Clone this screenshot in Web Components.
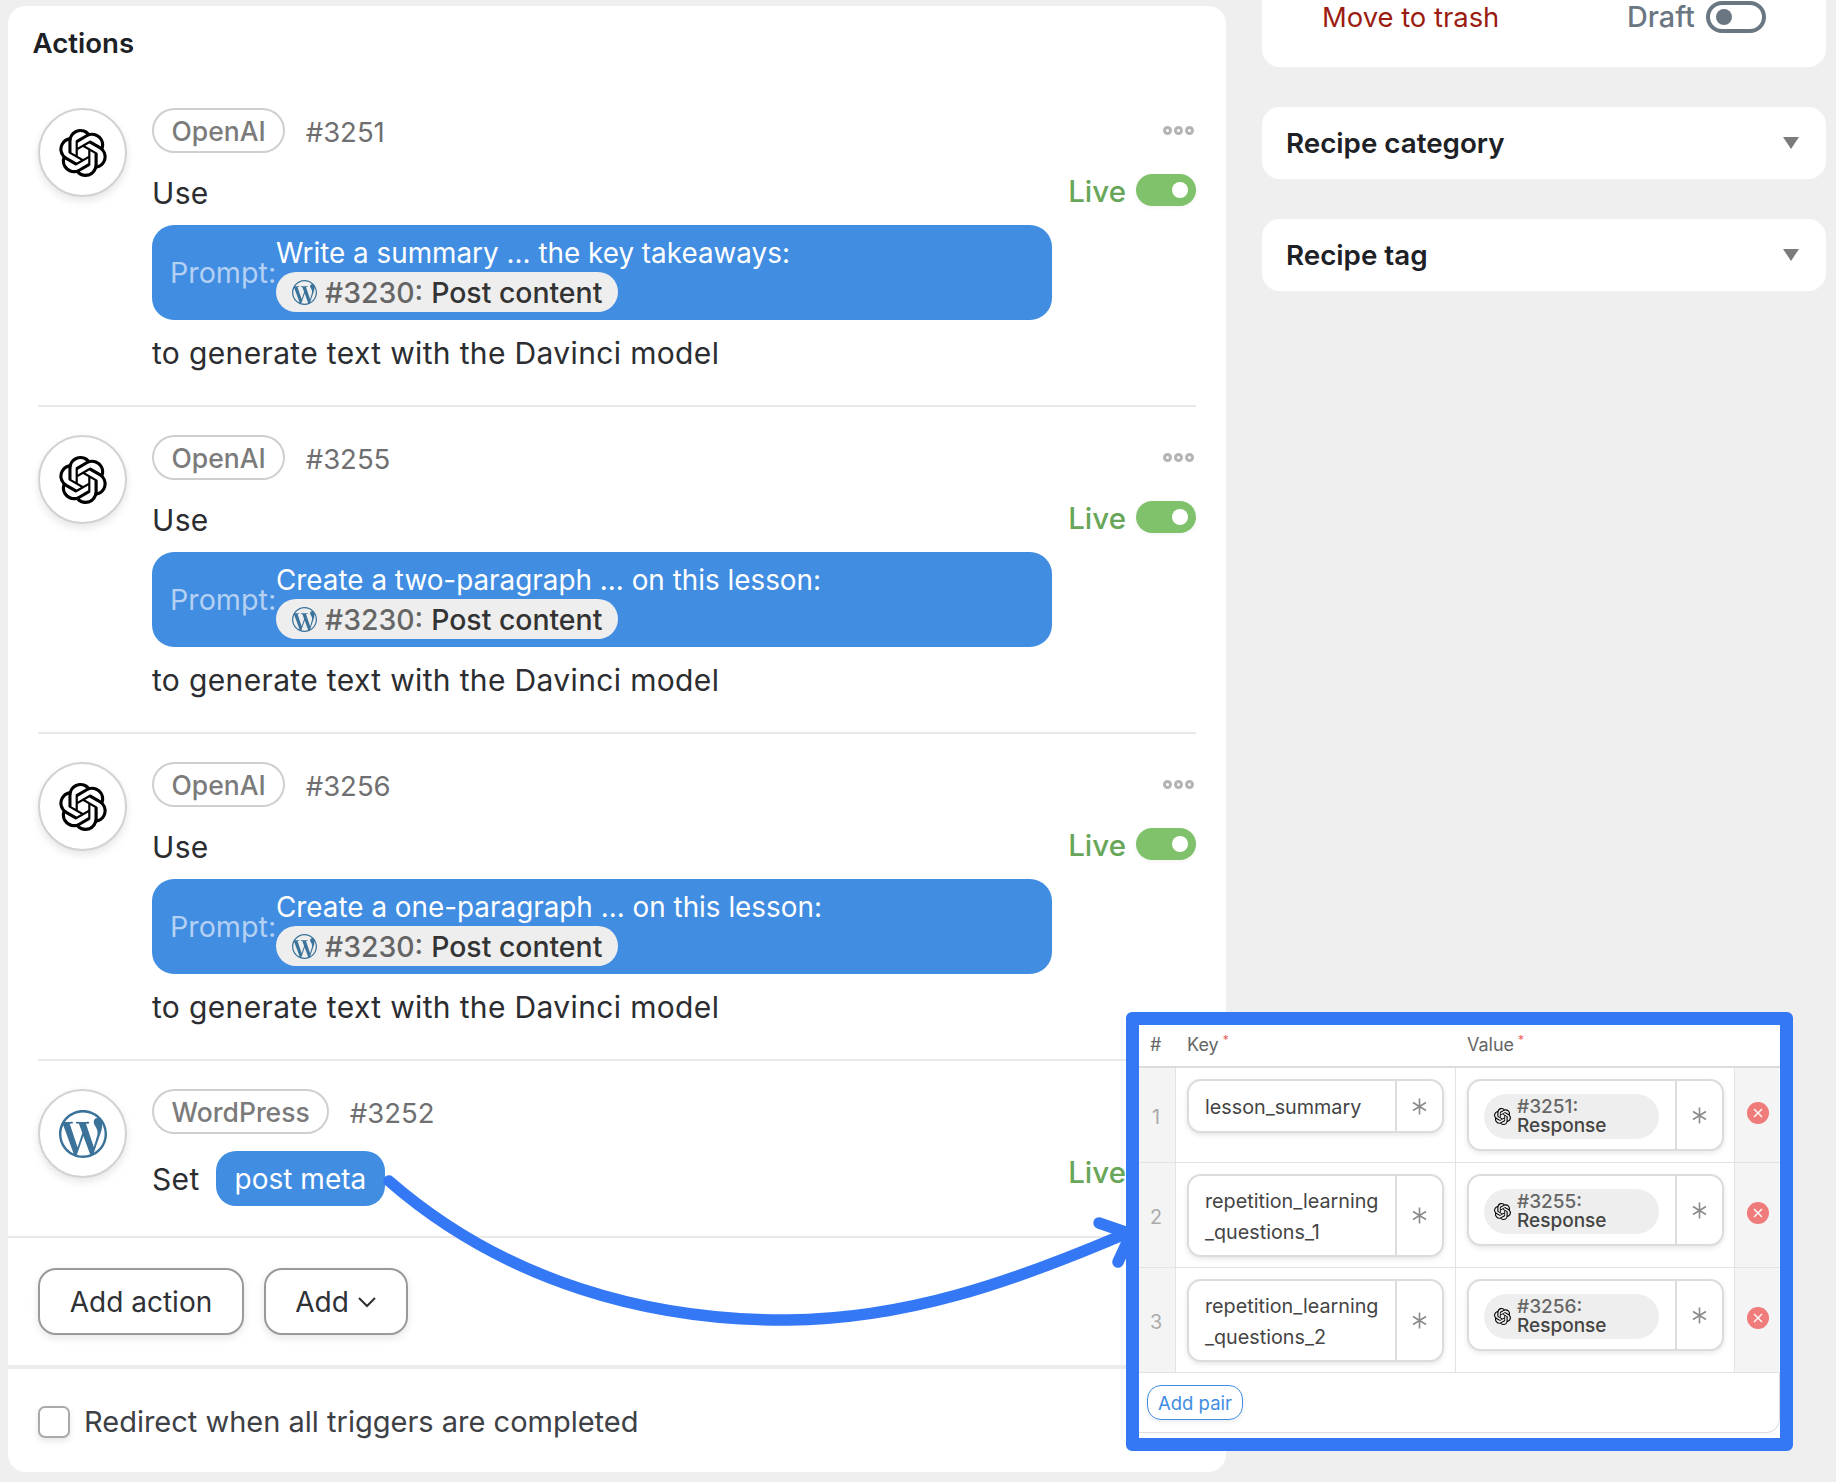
<!DOCTYPE html>
<html lang="en">
<head>
<meta charset="utf-8">
<title>Recipe actions</title>
<style>
  html, body { margin: 0; padding: 0; background: #efefef; }
  body { width: 1836px; height: 1482px; overflow: hidden; font-family: Inter, "Liberation Sans", sans-serif; }
</style>
</head>
<body>
<recipe-page>
  <actions-card slot="main">
    <action-row app="OpenAI" num="#3251" kind="openai" live>
      <span class="line">Use</span>
      <prompt-box text="Write a summary ... the key takeaways:"></prompt-box>
      <span class="line">to generate text with the Davinci model</span>
    </action-row>
    <action-row app="OpenAI" num="#3255" kind="openai" live>
      <span class="line">Use</span>
      <prompt-box text="Create a two-paragraph ... on this lesson:"></prompt-box>
      <span class="line">to generate text with the Davinci model</span>
    </action-row>
    <action-row app="OpenAI" num="#3256" kind="openai" live>
      <span class="line">Use</span>
      <prompt-box text="Create a one-paragraph ... on this lesson:"></prompt-box>
      <span class="line">to generate text with the Davinci model</span>
    </action-row>
    <action-row app="WordPress" num="#3252" kind="wordpress" live last set="post meta"></action-row>
  </actions-card>
  <publish-panel slot="side"></publish-panel>
  <side-panel slot="side" title="Recipe category"></side-panel>
  <side-panel slot="side" title="Recipe tag"></side-panel>
</recipe-page>

<flow-arrow></flow-arrow>

<pairs-table>
  <pair-row n="1" key-name="lesson_summary" ref="#3251:"></pair-row>
  <pair-row n="2" key-name="repetition_learning _questions_1" ref="#3255:"></pair-row>
  <pair-row n="3" key-name="repetition_learning _questions_2" ref="#3256:"></pair-row>
</pairs-table>

<script>
const OPENAI_PATH = "M22.2819 9.8211a5.9847 5.9847 0 0 0-.5157-4.9108 6.0462 6.0462 0 0 0-6.5098-2.9A6.0651 6.0651 0 0 0 4.9807 4.1818a5.9847 5.9847 0 0 0-3.9977 2.9 6.0462 6.0462 0 0 0 .7427 7.0966 5.98 5.98 0 0 0 .511 4.9107 6.051 6.051 0 0 0 6.5146 2.9001A5.9847 5.9847 0 0 0 13.2599 24a6.0557 6.0557 0 0 0 5.7718-4.2058 5.9894 5.9894 0 0 0 3.9977-2.9001 6.0557 6.0557 0 0 0-.7475-7.0729zm-9.022 12.6081a4.4755 4.4755 0 0 1-2.8764-1.0408l.1419-.0804 4.7783-2.7582a.7948.7948 0 0 0 .3927-.6813v-6.7369l2.02 1.1686a.071.071 0 0 1 .038.052v5.5826a4.504 4.504 0 0 1-4.4945 4.4944zm-9.6607-4.1254a4.4708 4.4708 0 0 1-.5346-3.0137l.142.0852 4.783 2.7582a.7712.7712 0 0 0 .7806 0l5.8428-3.3685v2.3324a.0804.0804 0 0 1-.0332.0615L9.74 19.9502a4.4992 4.4992 0 0 1-6.1408-1.6464zM2.3408 7.8956a4.485 4.485 0 0 1 2.3655-1.9728V11.6a.7664.7664 0 0 0 .3879.6765l5.8144 3.3543-2.0201 1.1685a.0757.0757 0 0 1-.071 0l-4.8303-2.7865A4.504 4.504 0 0 1 2.3408 7.872zm16.5963 3.8558L13.1038 8.364 15.1192 7.2a.0757.0757 0 0 1 .071 0l4.8303 2.7913a4.4944 4.4944 0 0 1-.6765 8.1042v-5.6772a.79.79 0 0 0-.407-.667zm2.0107-3.0231l-.142-.0852-4.7735-2.7818a.7759.7759 0 0 0-.7854 0L9.409 9.2297V6.8974a.0662.0662 0 0 1 .0284-.0615l4.8303-2.7866a4.4992 4.4992 0 0 1 6.6802 4.66zM8.3065 12.863l-2.02-1.1638a.0804.0804 0 0 1-.038-.0567V6.0742a4.4992 4.4992 0 0 1 7.3757-3.4537l-.142.0805L8.704 5.459a.7948.7948 0 0 0-.3927.6813zm1.0976-2.3654l2.602-1.4998 2.6069 1.4998v2.9994l-2.5974 1.4997-2.6067-1.4997Z";
const WP_PATH = "M21.469 6.825c.84 1.537 1.318 3.3 1.318 5.175 0 3.979-2.156 7.456-5.363 9.325l3.295-9.527c.615-1.54.82-2.771.82-3.864 0-.405-.026-.78-.07-1.11m-7.981.105c.647-.03 1.232-.105 1.232-.105.582-.075.514-.93-.067-.899 0 0-1.755.135-2.88.135-1.064 0-2.85-.15-2.85-.15-.585-.03-.661.855-.075.885 0 0 .54.075 1.125.105l1.68 4.605-2.37 7.08L5.354 6.9c.649-.03 1.234-.1 1.234-.1.585-.075.516-.93-.065-.896 0 0-1.746.138-2.874.138-.2 0-.438-.008-.69-.015C4.911 3.15 8.235 1.215 12 1.215c2.809 0 5.365 1.072 7.286 2.833-.046-.003-.091-.009-.141-.009-1.06 0-1.812.923-1.812 1.914 0 .89.513 1.643 1.06 2.531.411.72.89 1.643.89 2.977 0 .915-.354 1.994-.821 3.479l-1.075 3.585-3.9-11.61.001.014zM12 22.784c-1.059 0-2.081-.153-3.048-.437l3.237-9.406 3.315 9.087c.024.053.05.101.078.149-1.12.393-2.325.609-3.582.609M1.211 12c0-1.564.336-3.05.935-4.39L7.29 21.709C3.694 19.96 1.212 16.271 1.211 12M12 0C5.385 0 0 5.385 0 12s5.385 12 12 12 12-5.385 12-12S18.615 0 12 0";

// small helper, every element below just sets its shadow markup once
class Base extends HTMLElement {
  render(html) {
    if (!this.shadowRoot) this.attachShadow({ mode: "open" });
    this.shadowRoot.innerHTML = html;
  }
}

// app logo: kind = openai | wordpress
class AppLogo extends Base {
  connectedCallback() {
    const size = this.getAttribute("size") || 24;
    const wp = this.getAttribute("kind") === "wordpress";
    this.render(`
      <style>:host{display:inline-flex;width:${size}px;height:${size}px;flex:none} svg{width:100%;height:100%;display:block}</style>
      <svg viewBox="0 0 24 24"><path fill="${wp ? "#3a7299" : "#000"}" d="${wp ? WP_PATH : OPENAI_PATH}"/></svg>`);
  }
}
customElements.define("app-logo", AppLogo);

// thin six arm asterisk used at the end of inputs
class StarIcon extends Base {
  connectedCallback() {
    this.render(`
      <style>:host{display:inline-flex;width:15px;height:17px} svg{width:100%;height:100%}</style>
      <svg viewBox="0 0 15 17" fill="none" stroke="#8a8a8a" stroke-width="1.6"><path d="M7.5 0.5v16M1 4.5l13 8M14 4.5l-13 8"/></svg>`);
  }
}
customElements.define("star-icon", StarIcon);

class LiveToggle extends Base {
  connectedCallback() {
    this.render(`
      <style>
        :host{display:flex;align-items:center;gap:10px;font-size:29.5px;font-weight:500;color:#68a659;line-height:32px}
        span.t{padding-top:2px}
        .sw{width:60px;height:32px;border-radius:16px;background:#80c26b;position:relative;display:block;box-shadow:0 1px 4px rgba(0,0,0,.06)}
        .sw i{position:absolute;right:8px;top:8px;width:16px;height:16px;border-radius:50%;background:#fff}
      </style>
      <span class="t">Live</span><span class="sw"><i></i></span>`);
  }
}
customElements.define("live-toggle", LiveToggle);

class TokenPill extends Base {
  connectedCallback() {
    this.render(`
      <style>
        :host{display:inline-flex;align-items:center;height:40px;padding:0 16px 0 16px;border-radius:20px;background:#eee;font-size:28.4px;font-weight:500;color:#333;white-space:nowrap;align-self:flex-start}
        app-logo{margin-right:8px}
        b{font-weight:500;color:#666;margin-right:8px}
      </style>
      <app-logo kind="wordpress" size="25"></app-logo><b>#3230:</b>Post content`);
  }
}
customElements.define("token-pill", TokenPill);

class PromptBox extends Base {
  connectedCallback() {
    this.render(`
      <style>
        :host{display:flex;align-items:center;width:900px;height:95px;box-sizing:border-box;padding:0 0 0 18px;background:#408de2;border-radius:22px;color:#fff;font-size:27.85px}
        .lbl{color:#b4d0f3;width:106px;flex:none;white-space:nowrap;font-size:28.7px}
        .col{display:flex;flex-direction:column;padding-top:6px}
        .txt{line-height:34px;white-space:nowrap;margin-top:-3px;margin-bottom:2px}
      </style>
      <span class="lbl">Prompt:</span>
      <div class="col"><span class="txt">${this.getAttribute("text")}</span><token-pill></token-pill></div>`);
  }
}
customElements.define("prompt-box", PromptBox);

class ActionRow extends Base {
  connectedCallback() {
    const last = this.hasAttribute("last");
    const set = this.getAttribute("set");
    this.render(`
      <style>
        :host{display:flex;box-sizing:border-box;margin:0 30px;padding:0 0 ${last ? 0 : 34}px;border-bottom:${last ? 0 : 2}px solid #e9e9e9;margin-bottom:${last ? 0 : 28}px;height:${last ? "auto" : "299px"};font-size:30px;color:#2b2d30}
        .ic{width:89px;height:89px;box-sizing:border-box;border-radius:50%;border:2px solid #d2d2d2;background:#fff;box-shadow:0 4px 9px rgba(0,0,0,.1);display:flex;align-items:center;justify-content:center;margin-right:25px;flex:none}
        .main{width:900px;flex:none;display:flex;flex-direction:column}
        .head{display:flex;align-items:center;height:45px;gap:20.5px;color:#6f6f72;font-size:27.5px}
        .app{height:45px;box-sizing:border-box;display:flex;align-items:center;padding:1px 17.5px 0;border:2px solid #cfcfcf;border-radius:22.5px;color:#7b7b7b;font-weight:500;font-size:26.5px}
        .num{padding-top:2px}
        .body{display:flex;flex-direction:column;margin-top:23px}
        ::slotted(.line){line-height:34px;display:block;letter-spacing:.35px}
        ::slotted(prompt-box){margin:15px 0 16px}
        .setline{display:flex;align-items:center;margin-top:-6px;height:55px;gap:16px;letter-spacing:.35px}
        .tag{display:flex;align-items:center;height:55px;padding:0 19px;background:#408de2;border-radius:20px;color:#fff;font-size:28px;letter-spacing:0}
        .right{width:144px;flex:none;display:flex;flex-direction:column;align-items:flex-end;position:relative}
        .dots{display:flex;gap:2px;margin-top:18px;height:10px;margin-right:2px}
        .dots i{width:9px;height:9px;box-sizing:border-box;border-radius:50%;border:3px solid #b4b4b4}
        live-toggle{margin-top:37px}
      </style>
      <div class="ic"><app-logo kind="${this.getAttribute("kind")}" size="48"></app-logo></div>
      <div class="main">
        <div class="head"><span class="app">${this.getAttribute("app")}</span><span class="num">${this.getAttribute("num")}</span></div>
        ${set ? `<div class="body"><div class="setline"><span>Set</span><span class="tag">${set}</span></div></div>` : `<div class="body"><slot></slot></div>`}
      </div>
      <div class="right"><span class="dots"><i></i><i></i><i></i></span><live-toggle></live-toggle></div>`);
  }
}
customElements.define("action-row", ActionRow);

class ActionsCard extends Base {
  connectedCallback() {
    this.render(`
      <style>
        :host{display:block;width:1218px;height:1466px;margin-top:6px;background:#fff;border-radius:18px;color:#1d2125;position:relative}
        h2{margin:0;padding:0 0 0 24.5px;height:102px;box-sizing:border-box;font-size:27.6px;font-weight:600;line-height:75px}
        .rows{height:1128px}
        .bar{border-top:2px solid #e9e9e9;height:133px;box-sizing:border-box;border-bottom:4px solid #ececec;display:flex;gap:20px;padding:30px 0 0 30px}
        .btn{height:67px;box-sizing:border-box;border:2px solid #9a9a9a;border-radius:18px;background:#fff;display:flex;align-items:center;justify-content:center;font-size:28px;color:#2e3135;box-shadow:0 3px 8px rgba(0,0,0,.1);gap:8px}
        .check{display:flex;align-items:center;gap:14px;padding:35px 0 0 30px;font-size:29px;color:#3d4045}
        .box{width:32px;height:32px;box-sizing:border-box;border:2px solid #aaa;border-radius:7px;background:#fff;box-shadow:0 3px 6px rgba(0,0,0,.1)}
      </style>
      <h2>Actions</h2>
      <div class="rows"><slot></slot></div>
      <div class="bar">
        <span class="btn" style="width:206px">Add action</span>
        <span class="btn" style="width:144px">Add <svg width="20" height="12" viewBox="0 0 20 12" fill="none" stroke="#2e3135" stroke-width="2"><path d="M2 2l8 8 8-8"/></svg></span>
      </div>
      <div class="check"><span class="box"></span><span>Redirect when all triggers are completed</span></div>`);
  }
}
customElements.define("actions-card", ActionsCard);

class PublishPanel extends Base {
  connectedCallback() {
    this.render(`
      <style>
        :host{display:flex;align-items:flex-start;height:67px;box-sizing:border-box;background:#fff;border-radius:0 0 18px 18px;padding:1px 0 0 60px;font-size:27.4px;line-height:32px}
        .trash{color:#9b1c10;width:305px;white-space:nowrap}
        .draft{color:#6b7683;width:79px;font-weight:500;font-size:28.8px}
        .sw{width:60px;height:32px;box-sizing:border-box;border:4px solid #6b7683;border-radius:16px;position:relative;display:block}
        .sw i{position:absolute;left:6px;top:4px;width:16px;height:16px;border-radius:50%;background:#6b7683}
      </style>
      <span class="trash">Move to trash</span><span class="draft">Draft</span><span class="sw"><i></i></span>`);
  }
}
customElements.define("publish-panel", PublishPanel);

class SidePanel extends Base {
  connectedCallback() {
    this.render(`
      <style>
        :host{display:flex;align-items:center;justify-content:space-between;height:72px;box-sizing:border-box;margin-top:40px;background:#fff;border-radius:18px;padding:0 27px 0 24px;font-size:27.75px;font-weight:600;color:#1d2125}
        svg{display:block}
      </style>
      <span>${this.getAttribute("title")}</span>
      <svg width="16" height="12" viewBox="0 0 16 12"><path fill="#7b7b7b" d="M0 0h16L8 12z"/></svg>`);
  }
}
customElements.define("side-panel", SidePanel);

class RecipePage extends Base {
  connectedCallback() {
    this.render(`
      <style>
        :host{display:flex;padding-left:8px;gap:36px;width:1836px;height:1482px;box-sizing:border-box}
        .side{width:564px;flex:none;display:block}
      </style>
      <div><slot name="main"></slot></div>
      <div class="side"><slot name="side"></slot></div>`);
  }
}
customElements.define("recipe-page", RecipePage);

// the hand drawn arrow lies over the card
class FlowArrow extends Base {
  connectedCallback() {
    this.render(`
      <style>:host{position:absolute;left:0;top:0;width:1836px;height:1482px;pointer-events:none} svg{display:block}</style>
      <svg width="1836" height="1482" fill="none" stroke="#3578f6" stroke-width="11.5" stroke-linecap="round" stroke-linejoin="round">
        <path d="M389 1181C505 1282 650 1321 788 1320C905 1319 1010 1283 1125 1234"/>
        <path d="M1099 1223L1131 1234L1118 1262"/>
      </svg>`);
  }
}
customElements.define("flow-arrow", FlowArrow);

class PairRow extends Base {
  connectedCallback() {
    const key = this.getAttribute("key-name").split(" ");
    const n = this.getAttribute("n");
    const h = n === "1" ? 95 : 105;
    this.render(`
      <style>
        :host{display:grid;grid-template-columns:37px 280px 279px 44px;height:${h}px;box-sizing:border-box;border-bottom:1px solid #e3e3e3;font-size:19.75px;color:#444}
        .c{box-sizing:border-box;display:flex;align-items:flex-start;border-right:1px solid #e3e3e3}
        .num{background:#f4f4f4;align-items:center;justify-content:center;color:#aaa;padding:4px 2px 0 0}
        .f{display:flex;background:#fff;box-sizing:border-box;border:2px solid #dcdcdc;border-radius:14px;box-shadow:0 2px 5px rgba(0,0,0,.1);margin:11px 0 0 11px;width:257px}
        .k{flex:1;display:flex;flex-direction:column;justify-content:center;padding:10px 0 8px 16px;line-height:30.5px;border-right:2px solid #dcdcdc;white-space:nowrap}
        .s{width:45px;box-sizing:border-box;flex:none;display:flex;align-items:center;justify-content:center}
        .key .f{min-height:${n === "1" ? 54 : 81}px}
        .val .f{height:72px;width:257px}
        .pill{margin:13px 0 0 15px;width:175px;height:45px;border-radius:22.5px;background:#eee;display:flex;align-items:center;box-sizing:border-box;padding-left:10px;gap:6px}
        .t{font-size:19px;line-height:18.5px;font-weight:500;color:#444;width:90px}
        .t::first-line{color:#666}
        .v{flex:1;border-right:2px solid #dcdcdc}
        .del{background:#f4f4f4;border-right:0;align-items:center;justify-content:center;padding:0 0 5px 1px}
        .x{width:22px;height:22px;border-radius:50%;background:#ef7c7a;display:flex;align-items:center;justify-content:center}
      </style>
      <div class="c num">${n}</div>
      <div class="c key"><div class="f"><div class="k">${key.map(s => `<span>${s}</span>`).join("")}</div><div class="s"><star-icon></star-icon></div></div></div>
      <div class="c val"><div class="f"><div class="v"><div class="pill"><app-logo kind="openai" size="17"></app-logo><div class="t">${this.getAttribute("ref")} Response</div></div></div><div class="s"><star-icon></star-icon></div></div></div>
      <div class="c del"><span class="x"><svg width="10" height="10" viewBox="0 0 10 10" stroke="#fff" stroke-width="1.4"><path d="M1 1l8 8M9 1l-8 8"/></svg></span></div>`);
  }
}
customElements.define("pair-row", PairRow);

// screenshot pasted over the page, blue frame around it
class PairsTable extends Base {
  connectedCallback() {
    this.render(`
      <style>
        :host{position:absolute;left:1126px;top:1012px;width:667px;height:439px;box-sizing:border-box;border:13.5px solid #3578f6;border-radius:6px;background:#fff;color:#666;font-size:18px}
        .head{display:grid;grid-template-columns:37px 291px auto;height:43px;align-items:center;border-bottom:2px solid #dcdcdc;box-sizing:border-box;padding-bottom:3px}
        .head span{padding-left:11px}
        sup{color:#ef6060;font-size:12px;line-height:0;margin-left:4px}
        .foot{height:60px;box-sizing:border-box;border-bottom:1px solid #ddd;border-radius:0 0 14px 0;border-right:1px solid #ddd;padding:12px 0 0 8px}
        .add{display:inline-flex;align-items:center;height:35px;box-sizing:border-box;padding:0 10px;border:1.5px solid #408de2;border-radius:14px;color:#408de2;font-size:18.5px;box-shadow:0 2px 4px rgba(0,0,0,.08)}
      </style>
      <div class="head"><span>#</span><span>Key<sup>*</sup></span><span style="padding-left:0">Value<sup>*</sup></span></div>
      <slot></slot>
      <div class="foot"><span class="add">Add pair</span></div>`);
  }
}
customElements.define("pairs-table", PairsTable);
</script>
</body>
</html>
